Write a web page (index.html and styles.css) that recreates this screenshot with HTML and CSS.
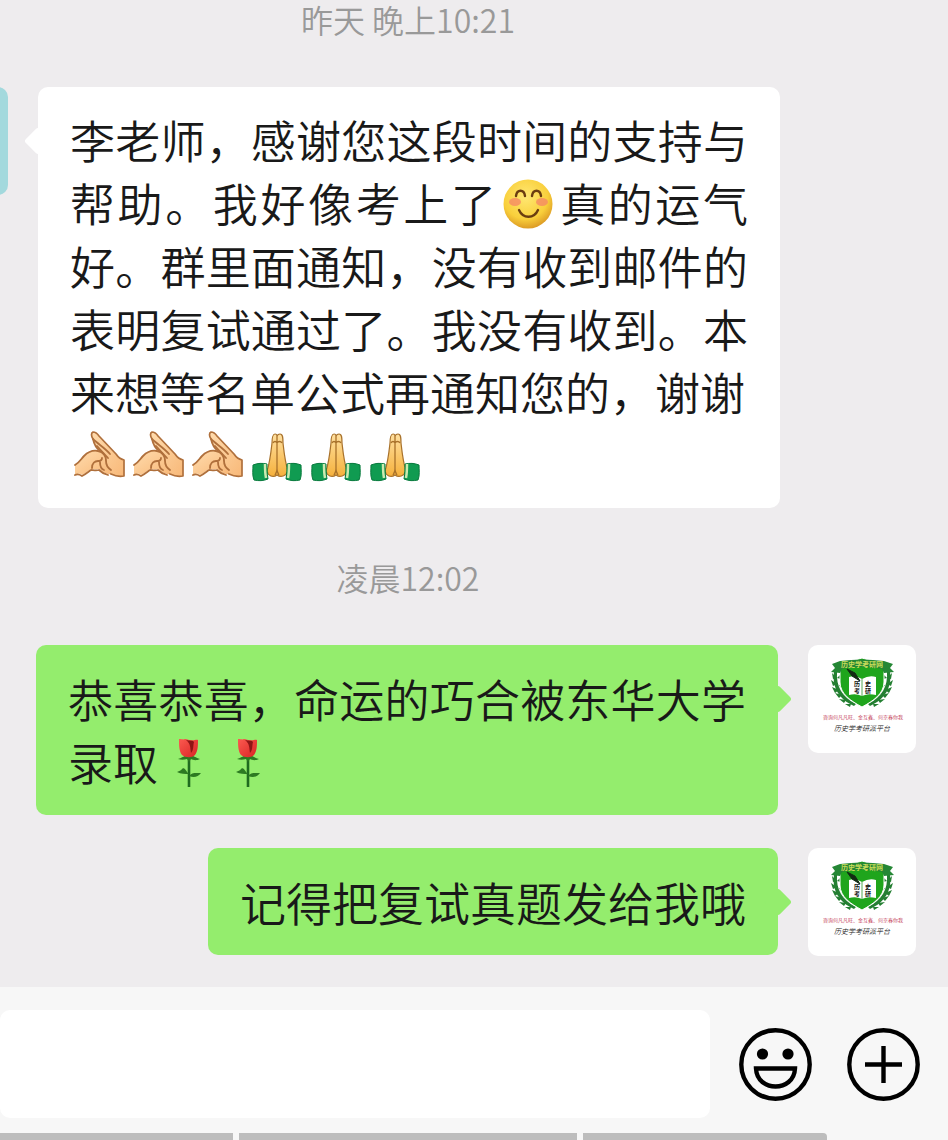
FILE: index.html
```html
<!DOCTYPE html>
<html lang="zh-CN">

<head>
  <meta charset="UTF-8" />
  <meta name="viewport" content="width=device-width, initial-scale=1.0" />
  <title>聊天</title>
  <link rel="stylesheet" href="styles.css">
</head>

<body>
  <!-- shared drawings -->
  <svg class="sprites" aria-hidden="true">
    <defs>
      <radialGradient id="face" cx="45%" cy="35%" r="65%">
        <stop offset="0" stop-color="#ffe873" />
        <stop offset="0.7" stop-color="#f9cf3b" />
        <stop offset="1" stop-color="#dd9c25" />
      </radialGradient>
      <linearGradient id="skin" x1="0" y1="0" x2="1" y2="1">
        <stop offset="0" stop-color="#ffdcae" />
        <stop offset="1" stop-color="#f8b878" />
      </linearGradient>
      <linearGradient id="palm" x1="0" y1="0" x2="0" y2="1">
        <stop offset="0" stop-color="#ffe0a0" />
        <stop offset="1" stop-color="#f6b13c" />
      </linearGradient>
      <linearGradient id="petal" x1="0" y1="0" x2="1" y2="1">
        <stop offset="0" stop-color="#fb5a50" />
        <stop offset="1" stop-color="#d92323" />
      </linearGradient>
    </defs>

    <symbol id="smile" viewBox="0 0 51 51">
      <circle cx="25" cy="25" r="24.500" fill="url(#face)" />
      <ellipse cx="12" cy="23" rx="6" ry="4" fill="#f58a64" opacity="0.8" />
      <ellipse cx="39" cy="23" rx="6" ry="4" fill="#f58a64" opacity="0.8" />
      <g fill="none" stroke="#6b3d10" stroke-width="2.400" stroke-linecap="round">
        <path d="M13 17c1-7 8-7 9 0" />
        <path d="M29 17c1-7 8-7 9 0" />
        <path d="M16 31c4 9 15 9 19 0" />
      </g>
    </symbol>

    <symbol id="salute" viewBox="0 0 51 51">
      <path d="M50 29v16c-5 1-9 0-13-2-3-2-5-5-5-9 0-6-2-11-6-14-4-3-6-7-7-12-2-3-2-6 0-7 2 0 4 1 6 4l17 18c2 3 4 5 8 6z" fill="url(#skin)" stroke="#b0703c" stroke-width="1.700" stroke-linejoin="round" />
      <path d="M1 34c5-3 6-6 9-9 4-4 9-6 14-5 6 1 8 5 8 10 0 4 2 7 5 9 1 2-1 5-3 4-4-1-7-3-9-5-3 1-6 0-8 0-3 2-5 4-9 6-2-2-5-1-7 0z" fill="url(#skin)" />
      <g fill="none" stroke="#b0703c" stroke-width="1.800" stroke-linecap="round" stroke-linejoin="round">
        <path d="M1 34c5-3 6-6 9-9 4-4 9-6 14-5 6 1 8 5 8 10 0 4 2 7 5 9" />
        <path d="M1 44c2-1 4-1 7 1 4-2 6-4 9-6 2 0 5 1 8 0 2 2 5 4 9 5" />
        <path d="M18 37c0-5 3-7 6-7 2 0 4-1 4-3M26 31c0 4 1 7 4 8" />
        <path d="M19 8c5 5 12 9 17 15M23 15l11 12" />
      </g>
    </symbol>

    <symbol id="pray" viewBox="0 0 51 51">
      <path d="M16 40c3-9 4-19 5-28 0-5 1-9 3-9s2 2 2 2 1-2 3-2c3 0 3 4 3 9 1 9 2 19 5 28-2 5-7 7-11 4-4 3-9 1-10-4z" fill="url(#palm)" stroke="#a9722b" stroke-width="1.200" />
      <path d="M26 5v34M22 12c1-2 3-2 4 0 1-2 4-2 5 0M26 38c0 3-1 4-2 6M26 38c0 3 1 4 2 6" fill="none" stroke="#a9722b" stroke-width="1.300" />
      <path d="M2 34c5-2 9-2 14-1 0 5 0 9 1 15-5 2-9 2-14 1-2-5-1-10-1-15z" fill="#109b51" stroke="#087a3d" />
      <path d="M50 34c-5-2-9-2-14-1 0 5 0 9-1 15 5 2 9 2 14 1 2-5 1-10 1-15z" fill="#109b51" stroke="#087a3d" />
      <path d="M14 33c0 5 0 9 1 14M38 33c0 5 0 9-1 14" fill="none" stroke="#cdeab0" stroke-width="2.500" />
    </symbol>

    <symbol id="rose" viewBox="0 0 51 51">
      <path d="M27 20v29" stroke="#1f6b1f" stroke-width="2.600" />
      <path d="M16 21c4-1 7-4 11-4s7 3 11 4c-4 2-7 1-9 0l-2 3-2-3c-3 1-6 1-9 0z" fill="#2d7a22" />
      <path d="M27 36c-4-4-3-5-6-6-1 2-4 3-6 4 4 2 8 2 12 2zM27 38c3-4 7-3 12-3-3 4-7 5-12 3z" fill="#2d7a22" />
      <path d="M17 1c3 0 4 1 6 0 3 0 5 2 6 1 3 1 5-1 7 0 0 6 0 11-3 15-3 3-9 3-13 0-3-4-3-10-3-16z" fill="url(#petal)" />
      <path d="M24 2c4 1 7 0 8 2-1 3 0 8-3 11-1-5 0-9-5-13z" fill="#8e1515" />
    </symbol>

    <symbol id="badge" viewBox="0 0 108 108">
      <g fill="#247f32">
        <path d="M26 27c-2 14 4 27 20 34l2-2C34 52 28 41 29 27z" />
        <path d="M82 27c2 14-4 27-20 34l-2-2C74 52 80 41 79 27z" />
        <path d="M29 33l-5-5 1 6zM29 39l-6-4 2 6zM31 45l-7-3 3 6zM34 50l-7-2 4 5zM38 55l-7-1 5 4zM43 59l-6 0 5 3zM29 33l4-4 0 5zM31 41l4-4 0 5zM35 48l3-5 1 6zM41 54l2-5 2 6z" />
        <path d="M79 33l5-5-1 6zM79 39l6-4-2 6zM77 45l7-3-3 6zM74 50l7-2-4 5zM70 55l7-1-5 4zM65 59l6 0-5 3zM79 33l-4-4 0 5zM77 41l-4-4 0 5zM73 48l-3-5-1 6zM67 54l-2-5-2 6z" />
      </g>
      <path d="M32 18q11-1 22-5 11 4 22 5v19c0 12-11 19-22 25-11-6-22-13-22-25z" fill="#1fa51c" stroke="#fff" stroke-width="1" />
      <path d="M24 19l8-3q22-3 44 0l9 3-3 4 4 4-10 1-2-4q-20-4-40 0l-2 4-9-1 4-4z" fill="#258735" />
      <path d="M41 32q7-2 13 2 7-4 14-2v18q-8-2-14 1-6-3-13-1z" fill="#fff" />
      <path d="M54 34v17" stroke="#56a957" stroke-width="1" />
      <path d="M39 24l8 4 5 8-8-5z" fill="#132b13" stroke="#132b13" />
      <text class="badge-book" x="46" y="41">历</text>
      <text class="badge-book" x="57" y="41">史</text>
      <text class="badge-book" x="46" y="48">考</text>
      <text class="badge-book" x="57" y="48">研</text>
      <text class="badge-ribbon" x="54" y="22">历史学考研网</text>
      <text class="badge-red" x="55" y="74">咨询何凡凡旺、金互鑫、何京春你我</text>
      <text class="badge-black" x="54" y="86">历史学考研派平台</text>
    </symbol>
  </svg>

  <div class="wrapper">
    <main class="chat">
      <time class="stamp">昨天 晚上10:21</time>

      <div class="row received">
        <div class="avatar contact"></div>
        <p class="bubble">李老师，感谢您这段时间的支持与帮助。我好像考上了<svg class="emoji" role="img" aria-label="愉快"><use href="#smile" /></svg>真的运气好。群里面通知，没有收到邮件的表明复试通过了。我没有收到。本来想等名单公式再通知您的，谢谢<br><svg class="emoji" role="img" aria-label="抱拳"><use href="#salute" /></svg><svg class="emoji" role="img" aria-label="抱拳"><use href="#salute" /></svg><svg class="emoji" role="img" aria-label="抱拳"><use href="#salute" /></svg><svg class="emoji" role="img" aria-label="合十"><use href="#pray" /></svg><svg class="emoji" role="img" aria-label="合十"><use href="#pray" /></svg><svg class="emoji" role="img" aria-label="合十"><use href="#pray" /></svg></p>
      </div>

      <time class="stamp">凌晨12:02</time>

      <div class="row sent">
        <p class="bubble">恭喜恭喜，命运的巧合被东华大学录取<svg class="emoji" role="img" aria-label="玫瑰"><use href="#rose" /></svg><svg class="emoji" role="img" aria-label="玫瑰"><use href="#rose" /></svg></p>
        <svg class="avatar"><use href="#badge" /></svg>
      </div>

      <div class="row sent">
        <p class="bubble short">记得把复试真题发给我哦</p>
        <svg class="avatar"><use href="#badge" /></svg>
      </div>
    </main>

    <footer class="composer">
      <div class="tools">
        <input class="message" type="text" aria-label="消息">
        <button class="tool" type="button" aria-label="表情">
          <svg viewBox="0 0 73 73">
            <circle cx="36.500" cy="36.500" r="34.200" fill="none" stroke="#000" stroke-width="4.400" />
            <circle cx="23.500" cy="26" r="5.600" />
            <circle cx="49" cy="26" r="5.600" />
            <path d="M17 40.500h39c-1 24-38 24-39 0z" fill="none" stroke="#000" stroke-width="4.400" />
          </svg>
        </button>
        <button class="tool" type="button" aria-label="更多">
          <svg viewBox="0 0 73 73">
            <circle cx="36.500" cy="36.500" r="34.200" fill="none" stroke="#000" stroke-width="4.400" />
            <path d="M18 36.500h37M36.500 18v37" stroke="#000" stroke-width="4.400" />
          </svg>
        </button>
      </div>
      <div class="keys">
        <span></span>
        <span></span>
        <span></span>
      </div>
    </footer>
  </div>
</body>

</html>
```
FILE: styles.css
```css
:root {
  --bg: #eeecee;
  --bar: #f7f7f7;
  --sent: #94ed6d;
  --text: #191919;
  --muted: #999999;
}

* {
  margin: 0;
  padding: 0;
  box-sizing: border-box;
}

body {
  font-family: "Noto Sans CJK SC", sans-serif;
  font-weight: 350;
  background-color: var(--bg);
  color: var(--text);
  overflow-x: hidden;
}

.sprites {
  position: absolute;
  width: 0;
  height: 0;
}

.wrapper {
  display: flex;
  flex-direction: column;
  min-height: 100vh;
  overflow: hidden;
}

.chat {
  flex-grow: 1;
  padding-bottom: 31px;
}

.stamp {
  display: block;
  margin: 50px 132px 48px 0;
  text-align: center;
  font-size: 32px;
  line-height: 39px;
  color: var(--muted);
}

.stamp:first-child {
  margin-top: 0;
}

.row {
  display: flex;
  align-items: flex-start;
  gap: 30px;
}

.row + .row {
  margin-top: 33px;
}

.sent {
  justify-content: flex-end;
  padding: 0 32px 0 36px;
}

/* the contact's avatar runs off the left edge */
.received {
  margin-left: -100px;
  padding-right: 168px;
}

.avatar {
  flex: none;
  width: 108px;
  height: 108px;
  border-radius: 10px;
  background-color: #fff;
}

.contact {
  background-color: #a3d9dd;
}

.bubble {
  position: relative;
  padding: 21px 32px 22px;
  border-radius: 10px;
  background-color: #fff;
  font-size: 45px;
  line-height: 63px;
  text-align: justify;
}

.sent .bubble {
  padding-top: 22px;
  background-color: var(--sent);
}

.sent .short {
  font-size: 46px;
}

.bubble::before {
  content: "";
  position: absolute;
  top: 44px;
  width: 20px;
  height: 20px;
  border-radius: 3px;
  background-color: inherit;
  transform: rotate(45deg);
}

.received .bubble::before {
  left: -10px;
}

.sent .bubble::before {
  right: -10px;
}

.emoji {
  width: 51px;
  height: 51px;
  margin: -4px 4px;
  vertical-align: -4px;
}

.badge-book {
  font-size: 6px;
  font-weight: 700;
  fill: #111;
}

.badge-ribbon {
  font-size: 7px;
  font-weight: 700;
  text-anchor: middle;
  fill: #c9dc5a;
}

.badge-red {
  font-size: 5px;
  text-anchor: middle;
  fill: #c0304a;
}

.badge-black {
  font-size: 7px;
  font-style: italic;
  text-anchor: middle;
  fill: #222;
}

.composer {
  padding-top: 23px;
  background-color: var(--bar);
}

.tools {
  display: flex;
  align-items: center;
  gap: 35px;
  padding-right: 28px;
}

.message {
  flex: 1;
  min-width: 0;
  height: 108px;
  margin-right: -6px;
  padding: 0 32px;
  border: none;
  border-radius: 10px;
  background-color: #fff;
  font: inherit;
  font-size: 45px;
}

.tool {
  flex: none;
  width: 73px;
  height: 73px;
  border: none;
  background: none;
}

.tool svg {
  display: block;
  width: 100%;
  height: 100%;
}

.keys {
  display: flex;
  gap: 6px;
  margin-top: 15px;
  padding-right: 121px;
}

.keys span {
  flex: 338;
  height: 7px;
  background-color: #bdbdbd;
}

.keys span:first-child {
  flex: 233;
}

.keys span:last-child {
  flex: 244;
  border-top-right-radius: 4px;
}
```
